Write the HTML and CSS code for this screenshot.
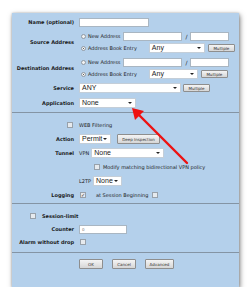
FILE: index.html
```html
<!DOCTYPE html>
<html lang="en">
<head>
    <meta charset="UTF-8">
    <title>Policy</title>
    <link rel="stylesheet" href="styles.css">
</head>
<body>
    <div class="panel">
        <section class="section section-address">
            <div class="row">
                <span class="label">Name (optional)</span>
                <div class="field"><span class="input w-name"></span></div>
            </div>

            <div class="group">
                <span class="label">Source Address</span>
                <div class="field">
                    <span class="radio"></span><span class="opt">New Address</span>
                    <span class="input w-addr"></span><span class="slash">/</span><span class="input w-mask"></span>
                </div>
                <div class="field">
                    <span class="radio on"></span><span class="opt">Address Book Entry</span>
                    <span class="select w-src">Any</span>
                    <span class="btn w-multi">Multiple</span>
                </div>
            </div>

            <div class="group">
                <span class="label">Destination Address</span>
                <div class="field">
                    <span class="radio"></span><span class="opt">New Address</span>
                    <span class="input w-addr"></span><span class="slash">/</span><span class="input w-mask"></span>
                </div>
                <div class="field">
                    <span class="radio on"></span><span class="opt">Address Book Entry</span>
                    <span class="select w-dst">Any</span>
                    <span class="btn w-multi">Multiple</span>
                </div>
            </div>

            <div class="row">
                <span class="label">Service</span>
                <div class="field">
                    <span class="select w-service">ANY</span>
                    <span class="btn w-multi">Multiple</span>
                </div>
            </div>

            <div class="row row-app">
                <span class="label">Application</span>
                <div class="field"><span class="select w-app">None</span></div>
            </div>
        </section>

        <section class="section section-action">
            <div class="row">
                <span class="check check-web"></span>
                <div class="field"><span class="opt">WEB Filtering</span></div>
            </div>
            <div class="row">
                <span class="label">Action</span>
                <div class="field">
                    <span class="select w-action">Permit</span>
                    <span class="btn w-deep">Deep Inspection</span>
                </div>
            </div>
            <div class="row">
                <span class="label">Tunnel</span>
                <div class="field">
                    <span class="opt">VPN</span>
                    <span class="select w-vpn">None</span>
                </div>
            </div>
            <div class="row">
                <span></span>
                <div class="field field-indent">
                    <span class="check"></span><span class="opt">Modify matching bidirectional VPN policy</span>
                </div>
            </div>
            <div class="row">
                <span></span>
                <div class="field">
                    <span class="opt">L2TP</span>
                    <span class="select w-l2tp">None</span>
                </div>
            </div>
            <div class="row">
                <span class="label">Logging</span>
                <div class="field">
                    <span class="check on">&#10003;</span>
                    <span class="opt opt-log">at Session Beginning</span>
                    <span class="check"></span>
                </div>
            </div>
        </section>

        <section class="section section-limit">
            <div class="row-wide">
                <span class="check"></span><span class="label">Session-limit</span>
            </div>
            <div class="row">
                <span class="label">Counter</span>
                <div class="field"><span class="input w-counter">0</span></div>
            </div>
            <div class="row">
                <span class="label">Alarm without drop</span>
                <div class="field"><span class="check"></span></div>
            </div>
        </section>

        <section class="section section-buttons">
            <span class="btn w-ok">OK</span>
            <span class="btn w-cancel">Cancel</span>
            <span class="btn w-adv">Advanced</span>
        </section>

        <svg class="arrow" width="70" height="70" viewBox="0 0 70 70">
            <line x1="61" y1="61" x2="9" y2="9" stroke="#ee1111" stroke-width="2.4" stroke-linecap="round"/>
            <polygon points="6,6 18,9 9,18" fill="#ee1111"/>
        </svg>
    </div>
</body>
</html>
```

FILE: styles.css
```css
:root {
    --panel: #b4d0eb;
    --line: #8494a4;
    --text: #1b1b1b;
    --label-width: 62px;
}

* {
    margin: 0;
    padding: 0;
    box-sizing: border-box;
}

body {
    background: #ffffff;
    font-family: 'DejaVu Sans', sans-serif;
    color: var(--text);
}

.panel {
    position: relative;
    width: 227px;
    height: 274px;
    margin: 13px 0 0 12px;
    background: var(--panel);
    box-shadow: 1px 2px 5px rgba(0, 0, 0, 0.5), 0 0 2px rgba(0, 0, 0, 0.2);
    display: flex;
    flex-direction: column;
}

.section {
    display: flex;
    flex-direction: column;
    border-bottom: 1px solid var(--line);
}

.section-address {
    padding: 3px 0 3px;
    gap: 2px;
}

.section-action {
    padding: 6px 0 2px;
    gap: 2px;
}

.section-limit {
    padding: 6px 0 4px;
    gap: 1px;
}

.section-buttons {
    border-bottom: none;
    flex-direction: row;
    padding: 6px 0 0 67px;
    gap: 9px;
}

.row {
    display: grid;
    grid-template-columns: var(--label-width) 1fr;
    column-gap: 5px;
    align-items: center;
    height: 12px;
}

.row-app {
    margin-top: 1px;
}

.group {
    display: grid;
    grid-template-columns: var(--label-width) 1fr;
    grid-template-rows: 12px 12px;
    column-gap: 5px;
    align-items: center;
}

.group .label {
    grid-row: span 2;
}

.row-wide {
    display: flex;
    align-items: center;
    gap: 3px;
    height: 12px;
    padding-left: 18px;
}

.label {
    font-size: 5px;
    font-weight: bold;
    text-align: right;
    white-space: nowrap;
}

.row-wide .label {
    text-align: left;
}

.field {
    display: flex;
    align-items: center;
    white-space: nowrap;
}

.field-indent {
    padding-left: 14px;
}

.opt {
    font-size: 5px;
    color: #1e1e1e;
    margin-right: 2px;
}

.opt-log {
    margin: 0 4px 0 7px;
}

.slash {
    font-size: 6px;
    margin: 0 3px;
}

.input {
    display: inline-block;
    height: 9px;
    background: #ffffff;
    border: 1px solid #a9b6c2;
    font-size: 4px;
    line-height: 7px;
    padding-left: 2px;
    color: #777777;
}

.select {
    position: relative;
    display: inline-block;
    height: 10px;
    background: #ffffff;
    border: 1px solid #c4ced8;
    font-family: 'Liberation Sans', sans-serif;
    font-size: 7px;
    line-height: 8px;
    padding-left: 2px;
}

.select:after {
    content: "";
    position: absolute;
    right: 3px;
    top: 3px;
    border-left: 2px solid transparent;
    border-right: 2px solid transparent;
    border-top: 2px solid #222222;
}

.btn {
    display: inline-flex;
    align-items: center;
    justify-content: center;
    height: 8px;
    background: linear-gradient(#f4f4f4, #d6d6d6);
    border: 1px solid #8e8e8e;
    border-radius: 1px;
    font-size: 4px;
    color: #333333;
}

.radio {
    width: 5px;
    height: 5px;
    border-radius: 50%;
    border: 1px solid #8f99a3;
    background: #f2f2f2;
    margin: 0 2px;
    position: relative;
}

.radio.on:after {
    content: "";
    position: absolute;
    left: 1px;
    top: 1px;
    width: 1px;
    height: 1px;
    background: #333333;
    border-radius: 50%;
}

.check {
    display: inline-flex;
    align-items: center;
    justify-content: center;
    width: 6px;
    height: 6px;
    border: 1px solid #98a1aa;
    background: #e6eaee;
    font-size: 5px;
    line-height: 1;
    color: #333333;
    margin-right: 3px;
}

.check-web {
    justify-self: end;
    margin-right: 1px;
}

.row .field > .check:first-child {
    margin-left: 1px;
}

.w-name { width: 70px; }
.w-addr { width: 59px; margin-left: 1px; }
.w-mask { width: 39px; }
.w-src { width: 56px; margin-left: 10px; margin-right: 3px; }
.w-dst { width: 49px; margin-left: 10px; margin-right: 3px; }
.w-multi { width: 27px; }
.w-service { width: 102px; margin-right: 2px; }
.w-app { width: 57px; }
.w-action { width: 32px; margin-right: 6px; height: 10px; }
.w-deep { width: 43px; height: 10px; }
.w-vpn { width: 73px; }
.w-l2tp { width: 29px; }
.w-counter { width: 48px; }
.w-ok { width: 24px; height: 10px; }
.w-cancel { width: 24px; height: 10px; }
.w-adv { width: 29px; height: 10px; }

.arrow {
    position: absolute;
    left: 114px;
    top: 89px;
}
```
